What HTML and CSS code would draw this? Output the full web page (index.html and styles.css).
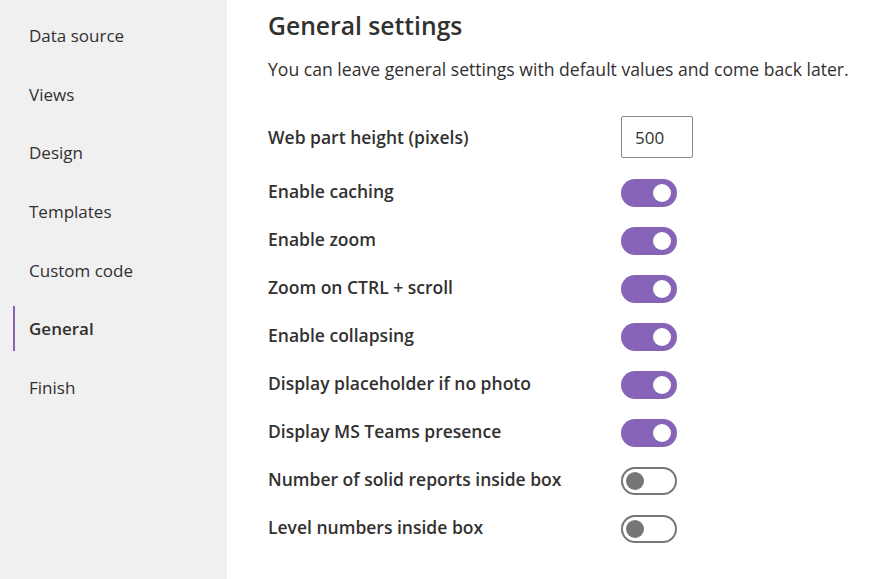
FILE: index.html
```html
<!DOCTYPE html>
<html lang="en">
<head>
<meta charset="utf-8">
<title>General settings</title>
<link rel="stylesheet" href="styles.css">
</head>
<body>
<div class="app">
  <nav class="sidebar">
    <div class="nav-item">Data source</div>
    <div class="nav-item">Views</div>
    <div class="nav-item">Design</div>
    <div class="nav-item">Templates</div>
    <div class="nav-item">Custom code</div>
    <div class="nav-item active">General</div>
    <div class="nav-item">Finish</div>
  </nav>
  <main class="content">
    <h1 class="title">General settings</h1>
    <p class="subtitle">You can leave general settings with default values and come back later.</p>
    <div class="settings">
      <div class="row first">
        <span class="label">Web part height (pixels)</span>
        <div class="field">500</div>
      </div>
      <div class="row">
        <span class="label">Enable caching</span>
        <span class="toggle on"><span class="thumb"></span></span>
      </div>
      <div class="row">
        <span class="label">Enable zoom</span>
        <span class="toggle on"><span class="thumb"></span></span>
      </div>
      <div class="row">
        <span class="label">Zoom on CTRL + scroll</span>
        <span class="toggle on"><span class="thumb"></span></span>
      </div>
      <div class="row">
        <span class="label">Enable collapsing</span>
        <span class="toggle on"><span class="thumb"></span></span>
      </div>
      <div class="row">
        <span class="label">Display placeholder if no photo</span>
        <span class="toggle on"><span class="thumb"></span></span>
      </div>
      <div class="row">
        <span class="label">Display MS Teams presence</span>
        <span class="toggle on"><span class="thumb"></span></span>
      </div>
      <div class="row">
        <span class="label">Number of solid reports inside box</span>
        <span class="toggle off"><span class="thumb"></span></span>
      </div>
      <div class="row">
        <span class="label">Level numbers inside box</span>
        <span class="toggle off"><span class="thumb"></span></span>
      </div>
    </div>
  </main>
</div>
</body>
</html>
```
FILE: styles.css
```css
html, body {
  margin: 0;
  padding: 0;
  height: 100%;
  background: #ffffff;
}
body {
  font-family: "Open Sans", "Noto Sans", sans-serif;
  color: #323130;
}
.app {
  display: flex;
  height: 579px;
  overflow: hidden;
}
.sidebar {
  width: 214px;
  flex: 0 0 214px;
  background: #f0f0f0;
  padding: 13px 0 0 13px;
  display: flex;
  flex-direction: column;
  gap: 13.7px;
}
.nav-item {
  height: 45px;
  display: flex;
  align-items: center;
  padding-left: 14px;
  font-size: 17px;
  color: #323130;
  border-left: 2px solid transparent;
  box-sizing: border-box;
}
.nav-item.active {
  border-left-color: #8764b8;
  font-weight: 600;
}
.content {
  flex: 1;
  padding: 8px 0 0 41px;
}
.title {
  margin: 0;
  font-size: 24.7px;
  font-weight: 600;
  line-height: 36px;
}
.subtitle {
  margin: 13px 0 0;
  font-size: 17.6px;
  line-height: 24px;
}
.settings {
  margin-top: 35px;
  display: flex;
  flex-direction: column;
}
.row {
  display: grid;
  grid-template-columns: 353px auto;
  align-items: center;
  height: 48px;
  font-size: 17.5px;
  font-weight: 600;
}
.row .label {
  padding-bottom: 4px;
}
.row.first .label {
  padding-bottom: 0;
}
.row.first {
  height: 42px;
  margin-bottom: 11px;
}
.field {
  width: 72px;
  height: 42px;
  box-sizing: border-box;
  border: 1px solid #8a8886;
  border-radius: 2px;
  font-weight: 400;
  display: flex;
  align-items: center;
  padding-left: 13px;
  font-size: 17px;
}
.toggle {
  width: 56px;
  height: 28px;
  box-sizing: border-box;
  border-radius: 14px;
  display: flex;
  align-items: center;
  padding: 0 6px;
}
.toggle .thumb {
  width: 18px;
  height: 18px;
  border-radius: 50%;
}
.toggle.on {
  background: #8764b8;
  justify-content: flex-end;
}
.toggle.on .thumb {
  background: #ffffff;
}
.toggle.off {
  background: #ffffff;
  border: 2px solid #767676;
  padding: 0 3px;
}
.toggle.off .thumb {
  background: #767676;
}
```
